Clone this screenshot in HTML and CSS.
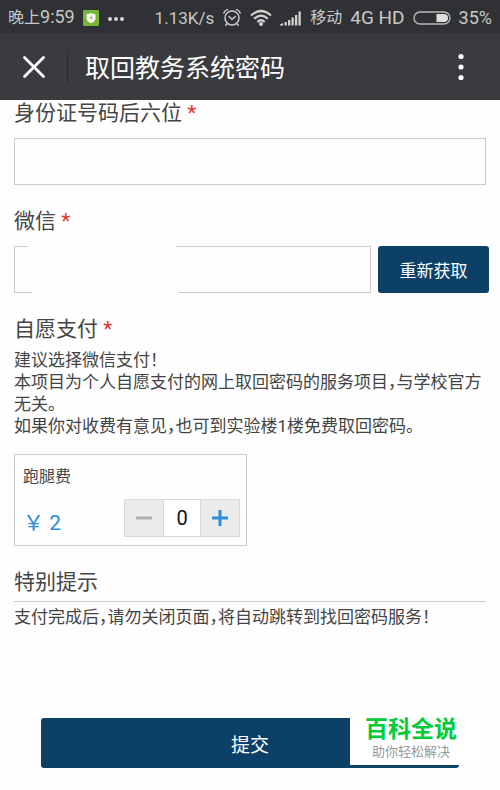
FILE: index.html
```html
<!DOCTYPE html>
<html lang="zh-CN">
<head>
<meta charset="utf-8">
<meta name="viewport" content="width=device-width, initial-scale=1">
<title>取回教务系统密码</title>
<link rel="stylesheet" href="styles.css">
</head>
<body>
<div class="status">
  <div class="status-left">
    <span class="clock"><span class="cjk">晚上</span>9:59</span>
    <svg class="shield" width="16" height="16" viewBox="0 0 16 16" aria-hidden="true">
      <rect width="16" height="16" rx="1" fill="#78b63a"/>
      <path d="M8 3l4.500 1.500v3.800c0 2.200-1.800 3.900-4.500 4.900-2.700-1-4.500-2.700-4.500-4.900V4.500z" fill="#f6faf2"/>
      <path d="M8.600 5.300L6.600 8h1.300L7.600 10.300l2.100-2.900H8.400z" fill="#78b63a"/>
    </svg>
    <svg width="18" height="6" viewBox="0 0 18 6" fill="#d6d6d6" aria-hidden="true">
      <circle cx="3" cy="4" r="2"/><circle cx="9" cy="4" r="2"/><circle cx="15" cy="4" r="2"/>
    </svg>
  </div>
  <div class="status-right">
    <span class="speed">1.13K/s</span>
    <svg class="alarm" width="20" height="20" viewBox="0 0 20 20" fill="none" stroke="#c9c9c9" stroke-width="1.500" stroke-linecap="round" aria-hidden="true">
      <circle cx="10" cy="10" r="7"/>
      <path d="M1.800 5Q2.600 2.400 5.400 1.600M18.200 5Q17.400 2.400 14.600 1.600M7 8.500l3 2.800L13.400 8.500M5 15.700L3.800 17.300M15 15.700l1.200 1.600"/>
    </svg>
    <svg class="wifi" width="22" height="18" viewBox="0 0 22 18" fill="none" stroke="#d2d2d2" stroke-width="2.200" aria-hidden="true">
      <path d="M1 6.500Q11-2.500 21 6.500M4.200 9.800Q11 3.600 17.800 9.800M7.300 13Q11 9.500 14.700 13"/>
      <circle cx="11" cy="15" r="2" fill="#d2d2d2" stroke="none"/>
    </svg>
    <svg class="signal" width="22" height="16" viewBox="0 0 22 16" fill="#d2d2d2" aria-hidden="true">
      <path d="M0 15.500v-1l3-1.500v2.500zM4.500 12h2.300v3.500H4.500zM8 10h2.300v5.500H8zM11.500 7.500h2.300v8h-2.300zM15 5h2.300v10.500H15zM18.500 1.500h2.300v14h-2.300z"/>
    </svg>
    <span class="cjk">移动</span>
    <span class="network">4G HD</span>
    <svg class="battery" width="38" height="14" viewBox="0 0 38 14" aria-hidden="true">
      <rect x="1" y="1" width="36" height="12" rx="6" fill="none" stroke="#b9b9b9" stroke-width="1.400"/>
      <path d="M23.500 3H31a4 4 0 0 1 0 8h-7.500z" fill="#dedede"/>
    </svg>
    <span>35%</span>
  </div>
</div>
<header class="nav">
  <button class="nav-close" type="button" aria-label="关闭">
    <svg width="24" height="24" viewBox="0 0 24 24" stroke="#fff" stroke-width="2.800" stroke-linecap="round"><path d="M2.500 2.500l19 19M21.500 2.500l-19 19"/></svg>
  </button>
  <h1 class="nav-title">取回教务系统密码</h1>
  <button class="nav-more" type="button" aria-label="更多">
    <svg width="6" height="28" viewBox="0 0 6 28" fill="#fff"><circle cx="3" cy="3.500" r="2.600"/><circle cx="3" cy="14" r="2.600"/><circle cx="3" cy="24.500" r="2.600"/></svg>
  </button>
</header>
<form class="form">
  <div class="field">
    <label class="label" for="idcard">身份证号码后六位 <span class="required">*</span></label>
    <input class="input" id="idcard" type="text">
  </div>
  <div class="field">
    <label class="label" for="wechat">微信 <span class="required">*</span></label>
    <div class="verify">
      <div class="verify-input">
        <input class="input" id="wechat" type="text">
        <svg class="smudge" width="156" height="60" viewBox="0 0 156 60" fill="#fefefe" aria-hidden="true"><path d="M4 0H147Q162 28 150 60H10Q-8 28 4 0z"/></svg>
      </div>
      <button class="button" type="button">重新获取</button>
    </div>
  </div>
  <div class="field">
    <h2 class="label">自愿支付 <span class="required">*</span></h2>
    <p class="text pay-text">建议选择微信支付！<br>本项目为个人自愿支付的网上取回密码的服务项目，与学校官方无关。<br>如果你对收费有意见，也可到实验楼1楼免费取回密码。</p>
    <div class="goods">
      <div class="card">
        <label class="card-name" for="count">跑腿费</label>
        <div class="card-row">
          <span class="price">￥ 2</span>
          <div class="stepper">
            <button class="step" type="button" aria-label="减少"><svg width="16" height="16" viewBox="0 0 16 16"><path d="M0 8h16" stroke="#a9b0ba" stroke-width="3"/></svg></button>
            <input class="count" id="count" type="text" value="0">
            <button class="step" type="button" aria-label="增加"><svg width="16" height="16" viewBox="0 0 16 16"><path d="M0 8h16M8 0v16" stroke="#2b8ddb" stroke-width="3"/></svg></button>
          </div>
        </div>
      </div>
    </div>
  </div>
  <div class="notice">
    <h2 class="label notice-title">特别提示</h2>
    <p class="text">支付完成后，请勿关闭页面，将自动跳转到找回密码服务！</p>
  </div>
  <div class="actions">
    <button class="button submit" type="submit">提交</button>
    <div class="brand">
      <strong class="brand-name">百科全说</strong>
      <span class="brand-line">助你轻松解决</span>
    </div>
  </div>
</form>
</body>
</html>
```
FILE: styles.css
```css
* {
  box-sizing: border-box;
}

body {
  margin: 0;
  background: #fefefe;
  color: #444;
  font-family: Roboto, "Noto Sans CJK SC", sans-serif;
  font-size: 17px;
}

h1, h2, p {
  margin: 0;
  font-weight: 400;
}

button, input {
  font: inherit;
  margin: 0;
  padding: 0;
  border: 0;
}

svg {
  display: block;
  flex: none;
}

.status {
  display: flex;
  justify-content: space-between;
  align-items: center;
  height: 33px;
  padding: 2px 8px 0;
  background: #303135;
  color: #c9c9c9;
  font-size: 18px;
  line-height: 24px;
  white-space: nowrap;
}

.status-left, .status-right {
  display: flex;
  align-items: center;
  gap: 8px;
}

.cjk {
  font-size: 16px;
}

.speed {
  font-size: 17px;
}

.network {
  font-size: 19px;
}

.nav {
  display: flex;
  align-items: center;
  height: 67px;
  background: #3a3b3f;
  color: #fff;
}

.nav-close, .nav-more {
  display: flex;
  align-items: center;
  justify-content: center;
  background: none;
}

.nav-close {
  width: 68px;
  height: 33px;
  border-right: 1px solid #2b2c30;
}

.nav-title {
  flex: 1;
  padding: 4px 0 0 17px;
  font-size: 25px;
  line-height: 36px;
}

.nav-more {
  width: 78px;
  height: 40px;
}

.form {
  padding: 0 14px 20px;
}

.field {
  margin-bottom: 23px;
}

.label {
  display: block;
  margin-bottom: 12px;
  font-size: 21px;
  line-height: 26px;
}

.required {
  color: #e5322d;
}

.input {
  display: block;
  width: 100%;
  height: 47px;
  padding: 0 10px;
  border: 1px solid #cbcbcb;
  background: #fefefe;
}

.verify {
  display: flex;
  gap: 7px;
  margin-right: -3px;
}

.verify-input {
  position: relative;
  flex: 1;
}

.smudge {
  position: absolute;
  top: -6px;
  left: 12px;
}

.button {
  width: 111px;
  border-radius: 3px;
  background: #0c4066;
  color: #fff;
}

.text {
  line-height: 22px;
  font-feature-settings: "halt";
}

.pay-text {
  margin: -5px 0 17px;
}

.goods {
  display: grid;
  grid-template-columns: 1fr 1fr;
  gap: 6px;
}

.card {
  padding: 11px 6px 8px 8px;
  border: 1px solid #cbcbcb;
}

.card-name {
  display: block;
  margin-bottom: 11px;
  font-size: 16px;
  line-height: 22px;
}

.card-row {
  display: flex;
  align-items: center;
  justify-content: space-between;
}

.price {
  padding-top: 10px;
  color: #2b8ddb;
  font-size: 21px;
  line-height: 24px;
}

.stepper {
  display: flex;
  height: 38px;
  border: 1px solid #dadada;
}

.step {
  display: flex;
  align-items: center;
  justify-content: center;
  width: 38px;
  background: #ebebeb;
}

.count {
  width: 38px;
  border: 1px solid #dadada;
  border-width: 0 1px;
  color: #111;
  font-size: 20px;
  text-align: center;
}

.notice-title {
  margin-bottom: 4px;
  padding-bottom: 6px;
  border-bottom: 1px solid #cbcbcb;
}

.actions {
  position: relative;
  margin-top: 90px;
  padding: 0 27px;
}

.submit {
  display: block;
  width: 100%;
  height: 50px;
  font-size: 19px;
}

.brand {
  position: absolute;
  right: 0;
  bottom: 3px;
  width: 136px;
  padding: 0 28px 4px 14px;
  background: #fff;
  text-align: center;
  white-space: nowrap;
}

.brand-name {
  display: block;
  color: #00cc3a;
  font-size: 23px;
  font-weight: 700;
  line-height: 26px;
}

.brand-line {
  display: block;
  color: #999;
  font-size: 13px;
  line-height: 18px;
}
```
